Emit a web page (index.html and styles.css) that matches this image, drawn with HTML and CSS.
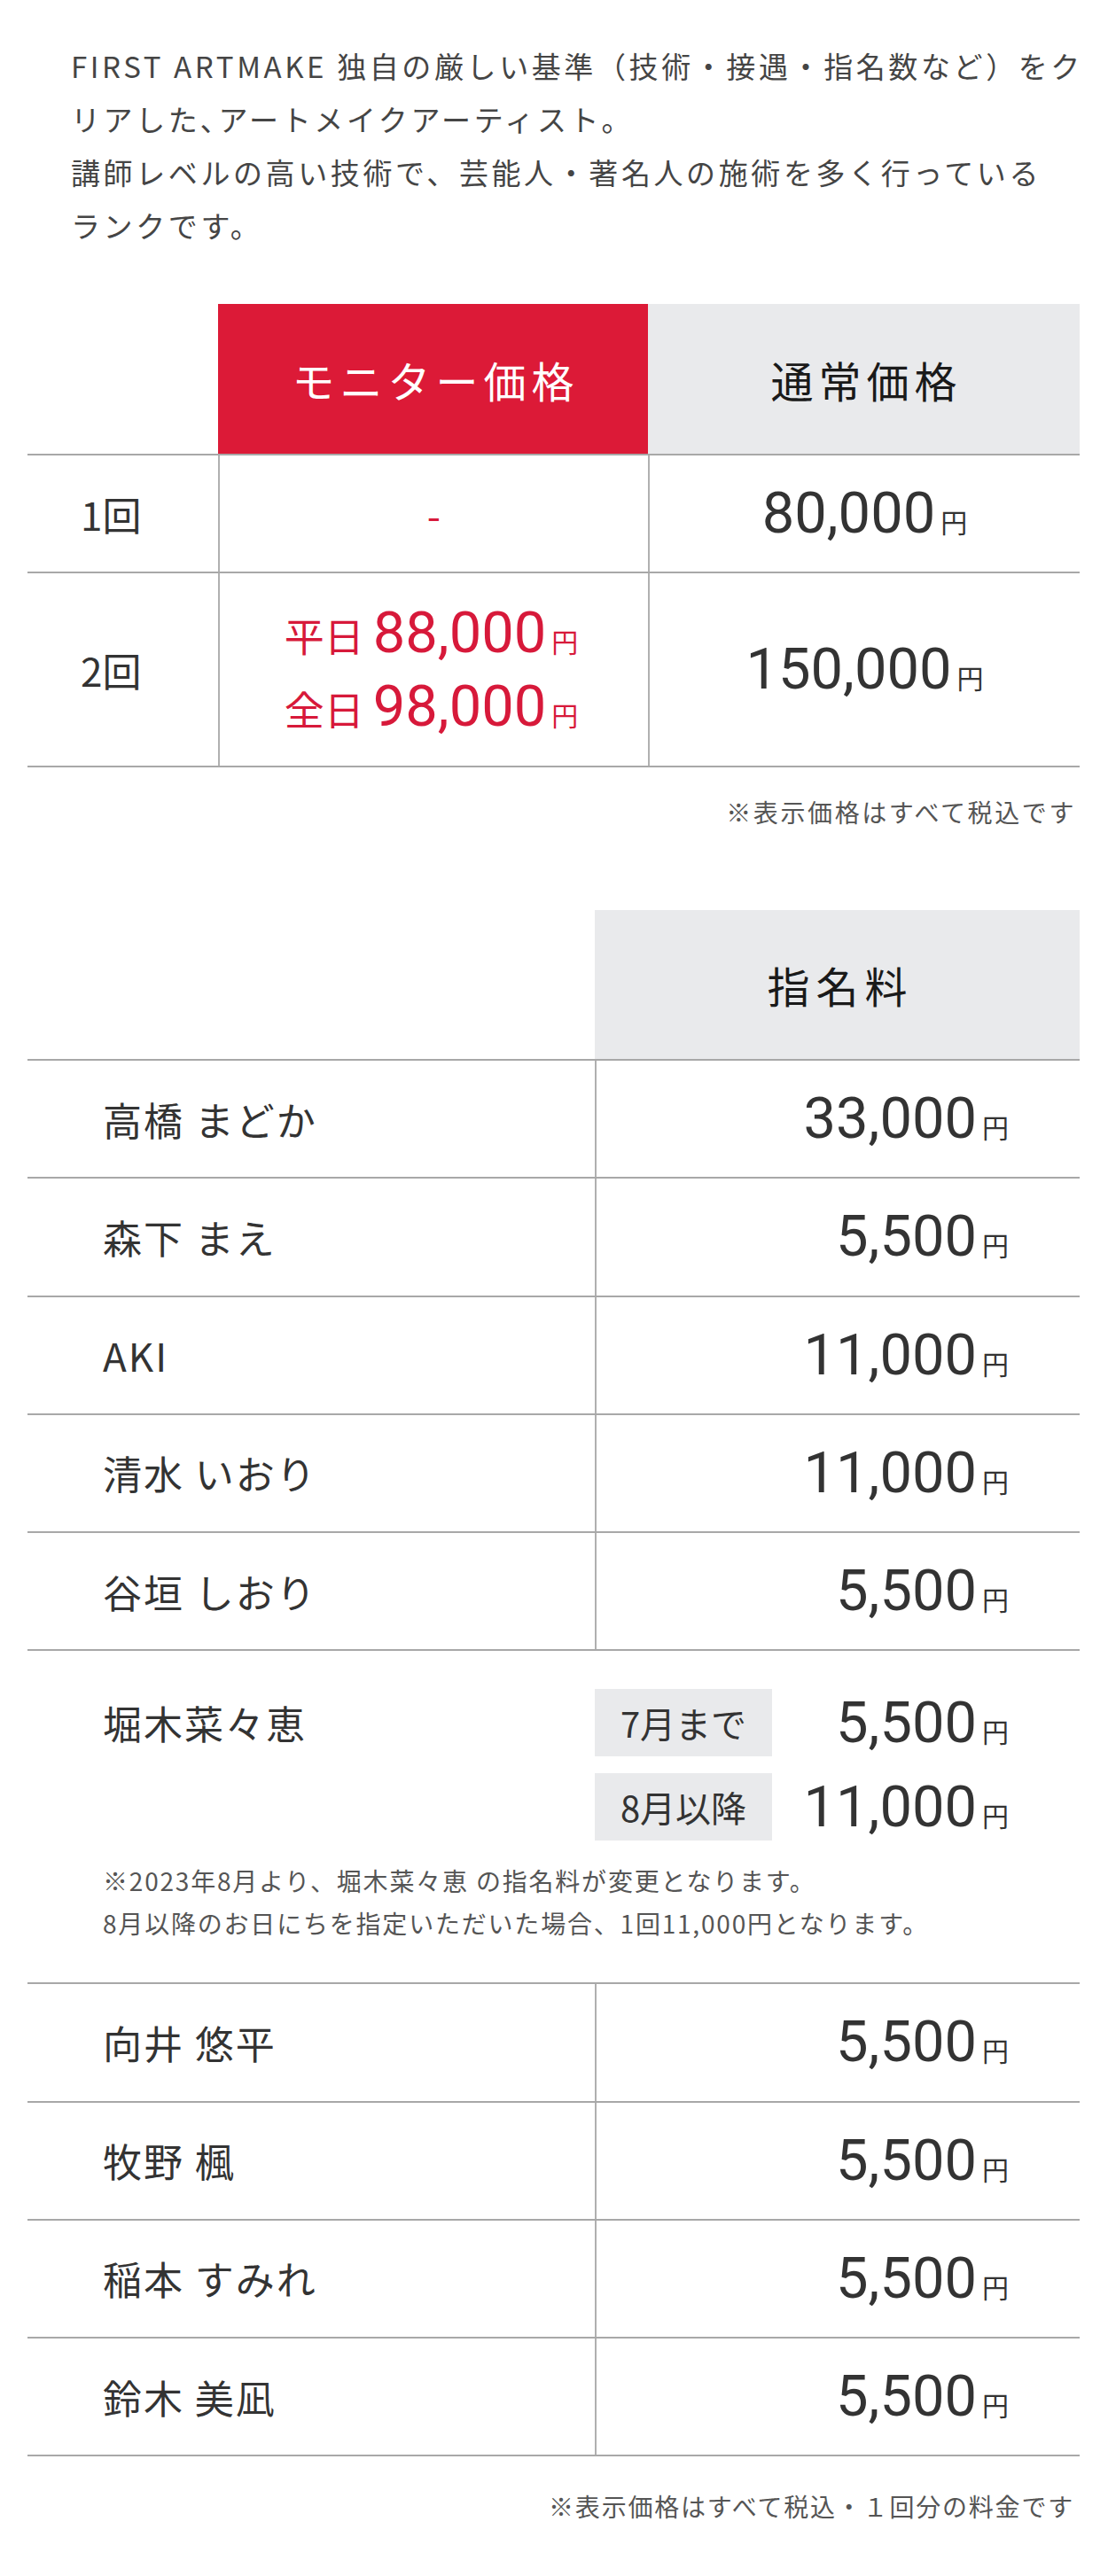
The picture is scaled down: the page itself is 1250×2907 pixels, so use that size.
FILE: index.html
```html
<!DOCTYPE html>
<html lang="ja">
<head>
<meta charset="utf-8">
<title>料金表</title>
<link rel="stylesheet" href="styles.css">
</head>
<body>
<div class="page">
  <p class="intro">FIRST ARTMAKE 独自の厳しい基準（技術・接遇・指名数など）をク<br>リアした､アートメイクアーティスト。<br>講師レベルの高い技術で、芸能人・著名人の施術を多く行っている<br>ランクです。</p>

  <div class="price-table">
    <div class="pt-row pt-head">
      <div class="cell blank"></div>
      <div class="cell head head-monitor">モニター価格</div>
      <div class="cell head head-regular">通常価格</div>
    </div>
    <div class="pt-row pt-r1">
      <div class="cell label">1回</div>
      <div class="cell center line-left"><span class="dash">-</span></div>
      <div class="cell center line-left"><span class="price"><span class="num">80,000</span><span class="yen">円</span></span></div>
    </div>
    <div class="pt-row pt-r2">
      <div class="cell label">2回</div>
      <div class="cell center line-left">
        <div class="monitor-prices">
          <span class="price red"><span class="day">平日</span><span class="num">88,000</span><span class="yen">円</span></span>
          <span class="price red"><span class="day">全日</span><span class="num">98,000</span><span class="yen">円</span></span>
        </div>
      </div>
      <div class="cell center line-left"><span class="price"><span class="num">150,000</span><span class="yen">円</span></span></div>
    </div>
  </div>
  <p class="note note-tax">※表示価格はすべて税込です</p>

  <div class="fee-table">
    <div class="ft-head">
      <div class="blank"></div>
      <div class="head head-fee">指名料</div>
    </div>
    <div class="ft-row"><div class="name">高橋 まどか</div><div class="fee"><span class="price"><span class="num">33,000</span><span class="yen">円</span></span></div></div>
    <div class="ft-row"><div class="name">森下 まえ</div><div class="fee"><span class="price"><span class="num">5,500</span><span class="yen">円</span></span></div></div>
    <div class="ft-row"><div class="name">AKI</div><div class="fee"><span class="price"><span class="num">11,000</span><span class="yen">円</span></span></div></div>
    <div class="ft-row"><div class="name">清水 いおり</div><div class="fee"><span class="price"><span class="num">11,000</span><span class="yen">円</span></span></div></div>
    <div class="ft-row"><div class="name">谷垣 しおり</div><div class="fee"><span class="price"><span class="num">5,500</span><span class="yen">円</span></span></div></div>
    <div class="ft-special">
      <div class="sp-main">
        <div class="sp-name">堀木菜々恵</div>
        <div class="sp-fees">
          <div class="sp-line"><span class="badge">7月まで</span><span class="price"><span class="num">5,500</span><span class="yen">円</span></span></div>
          <div class="sp-line"><span class="badge">8月以降</span><span class="price"><span class="num">11,000</span><span class="yen">円</span></span></div>
        </div>
      </div>
      <p class="sp-note">※2023年8月より、堀木菜々恵 の指名料が変更となります。<br>8月以降のお日にちを指定いただいた場合、1回11,000円となります。</p>
    </div>
    <div class="ft-row"><div class="name">向井 悠平</div><div class="fee"><span class="price"><span class="num">5,500</span><span class="yen">円</span></span></div></div>
    <div class="ft-row"><div class="name">牧野 楓</div><div class="fee"><span class="price"><span class="num">5,500</span><span class="yen">円</span></span></div></div>
    <div class="ft-row"><div class="name">稲本 すみれ</div><div class="fee"><span class="price"><span class="num">5,500</span><span class="yen">円</span></span></div></div>
    <div class="ft-row"><div class="name">鈴木 美凪</div><div class="fee"><span class="price"><span class="num">5,500</span><span class="yen">円</span></span></div></div>
  </div>
  <p class="note note-final">※表示価格はすべて税込・１回分の料金です</p>
</div>
</body>
</html>
```

FILE: styles.css
```css
* {
  box-sizing: border-box;
}

html, body {
  margin: 0;
  padding: 0;
  background: #ffffff;
}

body {
  font-family: "Noto Sans CJK JP", "Noto Sans", sans-serif;
  color: #333333;
}

.page {
  padding: 44px 32px 60px 31px;
}

.intro {
  margin: 0;
  padding: 0 10px 0 49px;
  font-size: 33px;
  line-height: 60px;
  letter-spacing: 3.6px;
  color: #454545;
  white-space: nowrap;
}

/* ---------- price table ---------- */
.price-table {
  margin-top: 59px;
}

.pt-row {
  display: grid;
  grid-template-columns: 215px 485px 1fr;
  border-bottom: 2px solid #a8a8a8;
}

.pt-head {
  height: 171px;
}

.pt-r1 {
  height: 133px;
}

.pt-r2 {
  height: 219px;
}

.cell {
  display: flex;
  align-items: center;
}

.center {
  justify-content: center;
}

.line-left {
  border-left: 2px solid #b0b0b0;
}

.head {
  justify-content: center;
  font-size: 48px;
  letter-spacing: 6px;
  padding-left: 6px;
}

.head-monitor {
  background: #dc1a37;
  color: #ffffff;
}

.head-regular {
  background: #e9eaec;
  color: #1a1a1a;
}

.label {
  padding-left: 60px;
  font-size: 44px;
  color: #333333;
}

.dash {
  color: #d7193a;
  font-size: 44px;
}

.price {
  white-space: nowrap;
  color: #333333;
  line-height: 1;
}

.num {
  font-family: Roboto, "Noto Sans", sans-serif;
  font-size: 65px;
}

.yen {
  font-size: 30px;
  margin-left: 6px;
}

.red {
  color: #d7193a;
}

.monitor-prices {
  display: flex;
  flex-direction: column;
  align-items: center;
  gap: 18px;
  padding-right: 6px;
}

.day {
  font-size: 45px;
  margin-right: 10px;
}

/* ---------- notes ---------- */
.note {
  margin: 0;
  text-align: right;
  font-size: 28px;
  line-height: 40px;
  color: #555555;
}

.note-tax {
  margin-top: 30px;
  letter-spacing: 2.6px;
  padding-right: 4px;
}

.note-final {
  margin-top: 36px;
  letter-spacing: 1.8px;
  padding-right: 6px;
}

/* ---------- fee table ---------- */
.fee-table {
  margin-top: 91px;
}

.ft-head {
  display: grid;
  grid-template-columns: 640px 1fr;
  height: 170px;
  border-bottom: 2px solid #a8a8a8;
}

.head-fee {
  display: flex;
  align-items: center;
  background: #e9eaec;
  color: #1a1a1a;
  letter-spacing: 7px;
  padding-left: 7px;
}

.ft-row {
  display: grid;
  grid-template-columns: 640px 1fr;
  height: 133.25px;
  border-bottom: 2px solid #a8a8a8;
}

.name,
.sp-name {
  font-size: 44px;
  letter-spacing: 2px;
  color: #333333;
  padding-left: 85px;
}

.name {
  display: flex;
  align-items: center;
}

.fee {
  display: flex;
  align-items: center;
  justify-content: flex-end;
  padding-right: 80px;
  border-left: 2px solid #b0b0b0;
}

.ft-special {
  padding-top: 43px;
  padding-bottom: 43px;
  border-bottom: 2px solid #a8a8a8;
}

.sp-main {
  display: grid;
  grid-template-columns: 640px 1fr;
}

.sp-name {
  line-height: 76px;
}

.sp-fees {
  display: flex;
  flex-direction: column;
  gap: 19px;
}

.sp-line {
  display: flex;
  align-items: center;
  justify-content: space-between;
  padding-right: 80px;
  height: 76px;
}

.badge {
  display: flex;
  align-items: center;
  justify-content: center;
  width: 200px;
  height: 76px;
  background: #e9eaec;
  font-size: 40px;
  color: #333333;
}

.sp-note {
  margin: 21px 0 0;
  padding-left: 85px;
  font-size: 28px;
  line-height: 48px;
  letter-spacing: 1.8px;
  color: #555555;
}
```
